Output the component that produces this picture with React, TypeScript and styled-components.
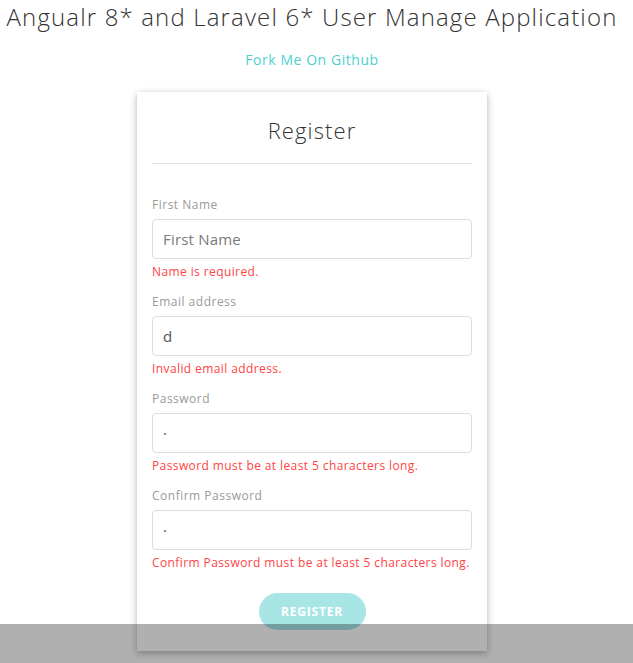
import React from "react";
import styled, { createGlobalStyle } from "styled-components";

const Global = createGlobalStyle`
  html, body { margin: 0; padding: 0; background: #fff; }
  body { font-family: "Open Sans", "Noto Sans", sans-serif; color: #333; }
  * { box-sizing: border-box; }
`;

const Page = styled.div`
  display: flex;
  flex-direction: column;
  align-items: center;
  padding: 0 9px 20px 0;
`;

const Heading = styled.h1`
  margin: 2px 0 0;
  font-size: 24px;
  font-weight: 300;
  line-height: 30px;
  letter-spacing: 1.15px;
  color: #333;
  text-align: center;
`;

const ForkLink = styled.a`
  margin-top: 18px;
  font-size: 14px;
  line-height: 20px;
  color: #4fcfcf;
  text-decoration: none;
  letter-spacing: 0.55px;
`;

const Card = styled.div`
  margin-top: 22px;
  width: 350px;
  background: #fff;
  box-shadow: 0 2px 7px rgba(0, 0, 0, 0.3);
  padding: 23px 15px 21px;
  display: flex;
  flex-direction: column;
`;

const CardTitle = styled.h2`
  margin: 0;
  font-size: 22px;
  font-weight: 300;
  line-height: 30px;
  text-align: center;
  color: #333;
  letter-spacing: 1.1px;
`;

const Divider = styled.hr`
  margin: 18px 0 32px;
  border: 0;
  border-top: 1px solid #e3e3e3;
`;

const Field = styled.div`
  display: flex;
  flex-direction: column;
  margin-bottom: 12px;
`;

const Label = styled.label`
  font-size: 12px;
  line-height: 18px;
  color: #9a9a9a;
  margin-bottom: 5px;
  letter-spacing: 0.5px;
`;

const Input = styled.input`
  height: 40px;
  border: 1px solid #dcdcdc;
  border-radius: 4px;
  padding: 0 10px;
  font-family: inherit;
  font-size: 15px;
  color: #555;
  letter-spacing: 0.2px;
  outline: none;
  &::placeholder { color: #7a7a7a; }
`;

const ErrorText = styled.div`
  margin-top: 4px;
  font-size: 12px;
  line-height: 18px;
  color: #ff4343;
  letter-spacing: 0.4px;
  white-space: nowrap;
`;

const Actions = styled.div`
  display: flex;
  justify-content: center;
  margin-top: 9px;
`;

const Button = styled.button`
  width: 107px;
  height: 37px;
  border: 0;
  border-radius: 19px;
  background: #a8e5e5;
  color: #fff;
  font-family: inherit;
  font-weight: 700;
  font-size: 12px;
  letter-spacing: 0.8px;
  text-transform: uppercase;
`;

const Overlay = styled.div`
  position: fixed;
  left: 0;
  right: 0;
  top: 624px;
  bottom: 0;
  background: rgba(0, 0, 0, 0.31);
`;

type FieldSpec = { label: string; value?: string; placeholder?: string; error: string };

const fields: FieldSpec[] = [
  { label: "First Name", placeholder: "First Name", error: "Name is required." },
  { label: "Email address", value: "d", error: "Invalid email address." },
  { label: "Password", value: "·", error: "Password must be at least 5 characters long." },
  { label: "Confirm Password", value: "·", error: "Confirm Password must be at least 5 characters long." },
];

export default function App() {
  return (
    <>
      <Global />
      <Page>
        <Heading>Angualr 8* and Laravel 6* User Manage Application</Heading>
        <ForkLink href="#">Fork Me On Github</ForkLink>
        <Card>
          <CardTitle>Register</CardTitle>
          <Divider />
          {fields.map((f) => (
            <Field key={f.label}>
              <Label>{f.label}</Label>
              <Input type="text" placeholder={f.placeholder} defaultValue={f.value} readOnly />
              <ErrorText>{f.error}</ErrorText>
            </Field>
          ))}
          <Actions>
            <Button disabled>Register</Button>
          </Actions>
        </Card>
      </Page>
      <Overlay />
    </>
  );
}
